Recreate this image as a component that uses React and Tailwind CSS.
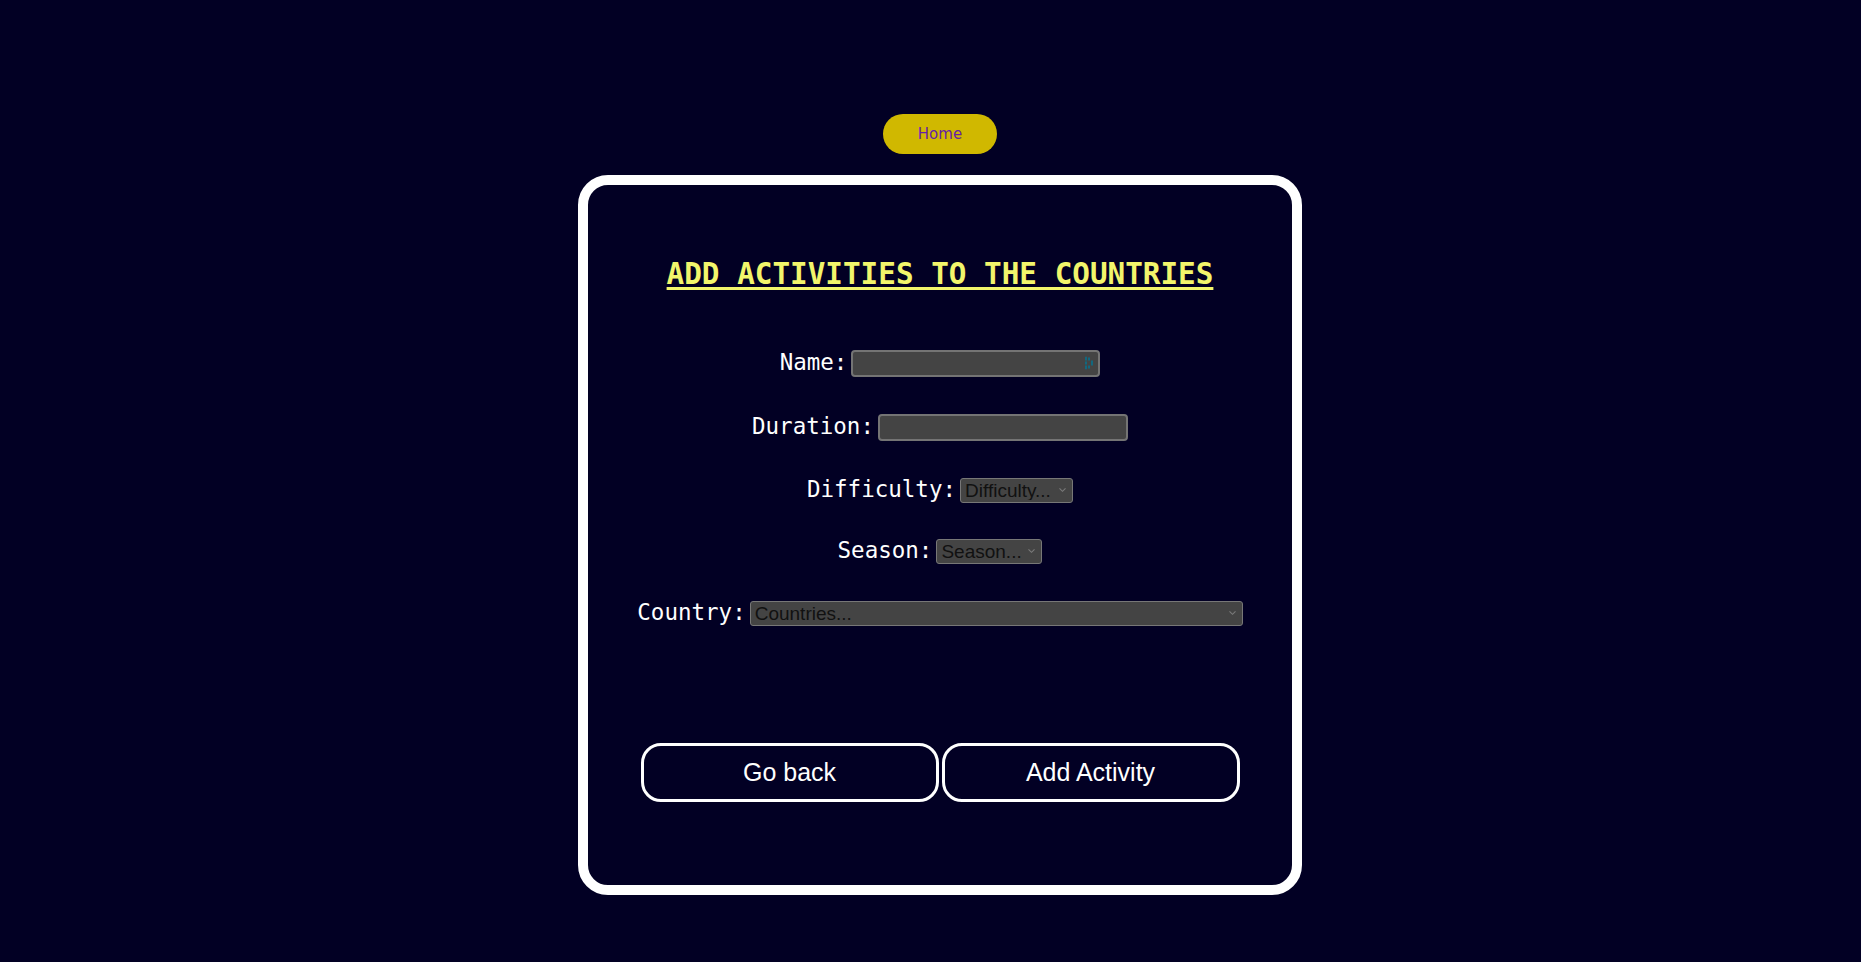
import { useState } from "react";

const mono = { fontFamily: '"DejaVu Sans Mono", "Liberation Mono", monospace' };
const sans = { fontFamily: '"Liberation Sans", Arial, sans-serif' };

function Chevron() {
  return (
    <svg
      className="pointer-events-none absolute right-[7px] top-1/2 -translate-y-1/2"
      width="7"
      height="5"
      viewBox="0 0 7 5"
    >
      <path d="M0.5 0.8 L3.5 3.8 L6.5 0.8" fill="none" stroke="#7a7a7a" strokeWidth="1.1" />
    </svg>
  );
}

function Select({ width, placeholder }) {
  return (
    <div className="relative ml-[4px]" style={{ width }}>
      <select
        defaultValue=""
        className="h-[25px] w-full appearance-none rounded-[3px] border border-[#777777] bg-[#444444] pl-[4px] pr-[16px] text-[19px] leading-none text-[#111111] outline-none"
        style={sans}
      >
        <option value="" disabled>
          {placeholder}
        </option>
      </select>
      <Chevron />
    </div>
  );
}

function Row({ label, children, className }) {
  return (
    <div className={`flex h-[28px] items-center justify-center ${className}`}>
      <label className="pb-[3px] text-[22.5px] leading-[28px] text-white" style={mono}>
        {label}
      </label>
      {children}
    </div>
  );
}

export default function App() {
  const [name, setName] = useState("");
  const [duration, setDuration] = useState("");

  return (
    <div className="flex min-h-screen flex-col items-center bg-[#020024] pl-[19px] pt-[114px]">
      <button
        className="h-[40px] w-[114px] rounded-full bg-[#d0b800] text-[15px] text-[#661fa6]"
        style={{ fontFamily: '"DejaVu Sans", Verdana, sans-serif' }}
      >
        Home
      </button>

      <div className="mt-[21px] flex h-[720px] w-[724px] flex-col items-center rounded-[30px] border-[10px] border-white pt-[72px]">
        <h1
          className="text-[29.3px] font-bold leading-[34px] text-[#f2f56b] underline decoration-[3px] underline-offset-[3px]"
          style={mono}
        >
          ADD ACTIVITIES TO THE COUNTRIES
        </h1>

        <form className="flex w-full flex-col" onSubmit={(e) => e.preventDefault()}>
          <Row label="Name:" className="mt-[58px]">
            <div className="relative ml-[4px]">
              <input
                value={name}
                onChange={(e) => setName(e.target.value)}
                className="h-[27px] w-[249px] rounded-[4px] border-2 border-[#747474] bg-[#444444] px-[4px] text-white outline-none"
              />
              {/* password-manager badge in the field */}
              <svg
                className="pointer-events-none absolute right-[6px] top-1/2 -translate-y-1/2"
                width="9"
                height="13"
                viewBox="0 0 9 13"
              >
                <rect x="0" y="0" width="2" height="4" fill="#12687f" />
                <rect x="0" y="5" width="2" height="3" fill="#12687f" />
                <rect x="0" y="9" width="2" height="4" fill="#12687f" />
                <rect x="3" y="1" width="2" height="3" fill="#12687f" />
                <rect x="3" y="9" width="2" height="3" fill="#12687f" />
                <rect x="6" y="4" width="2" height="5" fill="#12687f" />
              </svg>
            </div>
          </Row>

          <Row label="Duration:" className="mt-[36px]">
            <input
              value={duration}
              onChange={(e) => setDuration(e.target.value)}
              className="ml-[4px] h-[27px] w-[250px] rounded-[4px] border-2 border-[#747474] bg-[#444444] px-[4px] text-white outline-none"
            />
          </Row>

          <Row label="Difficulty:" className="mt-[35px]">
            <Select width={113} placeholder="Difficulty..." />
          </Row>

          <Row label="Season:" className="mt-[33px]">
            <Select width={106} placeholder="Season..." />
          </Row>

          <Row label="Country:" className="mt-[34px]">
            <Select width={493} placeholder="Countries..." />
          </Row>

          <div className="mt-[116px] flex justify-center gap-[3px]">
            <button
              type="button"
              className="h-[59px] w-[298px] rounded-[20px] border-[3px] border-white text-[25px] text-white"
              style={sans}
            >
              Go back
            </button>
            <button
              type="submit"
              className="h-[59px] w-[298px] rounded-[20px] border-[3px] border-white text-[25px] text-white"
              style={sans}
            >
              Add Activity
            </button>
          </div>
        </form>
      </div>
    </div>
  );
}
